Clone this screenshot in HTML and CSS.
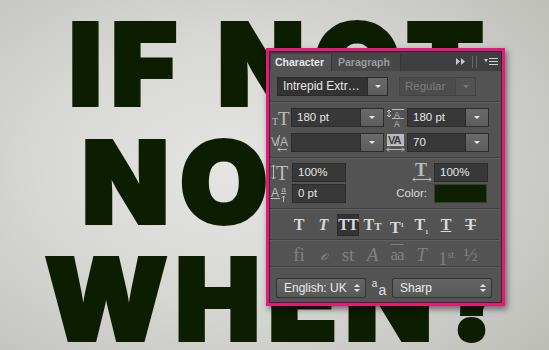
FILE: index.html
```html
<!DOCTYPE html>
<html lang="en">
<head>
    <meta charset="UTF-8">
    <meta name="viewport" content="width=device-width, initial-scale=1.0">
    <title>If Not Now When - Character panel</title>
    <link rel="stylesheet" href="styles.css">
</head>
<body>
    <div class="poster">
        <div class="line line-1">IF NOT</div>
        <div class="line line-2">NOW</div>
        <div class="line line-3">WHEN?</div>
    </div>

    <!-- Character panel (floats over the artwork) -->
    <div class="panel">
        <div class="panel-inner">
            <div class="tabs">
                <div class="tab active">Character</div>
                <div class="tab">Paragraph</div>
                <div class="tab-tools">
                    <svg width="9" height="7" viewBox="0 0 9 7"><path d="M0 0 L4 3.5 L0 7 Z M5 0 L9 3.5 L5 7 Z" fill="#c9c9c9"/></svg>
                    <span class="grip"></span>
                    <svg width="14" height="9" viewBox="0 0 14 9"><path d="M0 2 L4 2 L2 5 Z" fill="#d0d0d0"/><path d="M5 1.5 H14 M5 4.5 H14 M5 7.5 H14" stroke="#d0d0d0" stroke-width="1.2"/></svg>
                </div>
            </div>

            <div class="font-row">
                <div class="select font-select">
                    <span class="value">Intrepid Extr…</span>
                    <span class="drop"><i class="caret"></i></span>
                </div>
                <div class="select style-select">
                    <span class="value">Regular</span>
                    <span class="drop"><i class="caret"></i></span>
                </div>
            </div>

            <div class="sep"></div>

            <div class="metric-row">
                <div class="icon icon-a">
                    <svg width="21" height="19" viewBox="0 0 21 19">
                        <text x="2" y="17" class="serif" font-size="10" fill="#bcbcbc">T</text>
                        <text x="8" y="17" class="serif" font-size="19" fill="#bcbcbc">T</text>
                    </svg>
                </div>
                <div class="field field-lg">
                    <span class="value">180 pt</span>
                    <span class="drop"><i class="caret"></i></span>
                </div>
                <div class="icon icon-b">
                    <svg width="23" height="19" viewBox="0 0 23 19">
                        <path d="M8 1.5 H20" stroke="#bcbcbc" stroke-width="1"/>
                        <text x="10" y="9.5" class="sans" font-size="8.5" fill="#bcbcbc">A</text>
                        <path d="M8 10.5 H20" stroke="#bcbcbc" stroke-width="1"/>
                        <text x="10" y="19" class="sans" font-size="8.5" fill="#bcbcbc">A</text>
                        <path d="M5 2 V9 M3 4 L5 2 L7 4 M3 7 L5 9 L7 7" stroke="#bcbcbc" stroke-width="1" fill="none"/>
                    </svg>
                </div>
                <div class="field field-md">
                    <span class="value">180 pt</span>
                    <span class="drop"><i class="caret"></i></span>
                </div>
            </div>

            <div class="metric-row second">
                <div class="icon icon-a">
                    <svg width="21" height="19" viewBox="0 0 21 19">
                        <text x="1" y="13" class="sans" font-size="12" fill="#bcbcbc">V</text>
                        <path d="M9.5 2 L7.5 13" stroke="#bcbcbc" stroke-width="1"/>
                        <text x="10" y="13" class="sans" font-size="12" fill="#bcbcbc">A</text>
                        <path d="M8 16.5 H17 M10 14.5 L8 16.5 L10 18.5" stroke="#bcbcbc" stroke-width="1" fill="none"/>
                    </svg>
                </div>
                <div class="field field-lg">
                    <span class="value"></span>
                    <span class="drop"><i class="caret"></i></span>
                </div>
                <div class="icon icon-b">
                    <svg width="23" height="19" viewBox="0 0 23 19">
                        <rect x="3" y="1" width="17" height="11" fill="#b9b9b9"/>
                        <text x="4" y="11" class="sans" font-size="11" font-weight="bold" fill="#3d3d3d" letter-spacing="-1">VA</text>
                        <path d="M3 12.5 H20" stroke="#d0d0d0" stroke-width="1"/>
                        <path d="M3 16.5 H20 M5 14.5 L3 16.5 L5 18.5 M18 14.5 L20 16.5 L18 18.5" stroke="#bcbcbc" stroke-width="1" fill="none"/>
                    </svg>
                </div>
                <div class="field field-md">
                    <span class="value">70</span>
                    <span class="drop"><i class="caret"></i></span>
                </div>
            </div>

            <div class="sep"></div>

            <div class="scale-row">
                <div class="icon icon-c">
                    <svg width="22" height="19" viewBox="0 0 22 19">
                        <path d="M3.5 2 V16 M1.5 4 L3.5 2 L5.5 4 M1.5 14 L3.5 16 L5.5 14" stroke="#bcbcbc" stroke-width="1" fill="none"/>
                        <text x="6" y="17" class="serif" font-size="20" fill="#bcbcbc">T</text>
                    </svg>
                </div>
                <div class="field field-sm"><span class="value">100%</span></div>
                <div class="label-cell">
                    <svg width="22" height="19" viewBox="0 0 22 19">
                        <text x="4" y="13" class="serif" font-size="18" font-weight="bold" fill="#bcbcbc">T</text>
                        <path d="M2 16.5 H20 M4 14.5 L2 16.5 L4 18.5 M18 14.5 L20 16.5 L18 18.5" stroke="#bcbcbc" stroke-width="1" fill="none"/>
                    </svg>
                </div>
                <div class="field field-sm"><span class="value">100%</span></div>
            </div>

            <div class="scale-row second">
                <div class="icon icon-c">
                    <svg width="22" height="19" viewBox="0 0 22 19">
                        <text x="1" y="13" class="sans" font-size="12" fill="#bcbcbc">A</text>
                        <path d="M1 14.5 H10" stroke="#bcbcbc" stroke-width="1"/>
                        <text x="11.5" y="8" class="sans" font-size="8" fill="#bcbcbc">a</text>
                        <path d="M11 9.5 H16" stroke="#bcbcbc" stroke-width="1"/>
                        <path d="M13.5 12 V18 M12 13.5 L13.5 12 L15 13.5" stroke="#bcbcbc" stroke-width="1" fill="none"/>
                    </svg>
                </div>
                <div class="field field-sm"><span class="value">0 pt</span></div>
                <div class="label-cell color-label">Color:</div>
                <div class="swatch"></div>
            </div>

            <div class="sep"></div>

            <div class="type-row">
                <span class="tbtn">T</span>
                <span class="tbtn italic">T</span>
                <span class="tbtn on">TT</span>
                <span class="tbtn">T<small>T</small></span>
                <span class="tbtn">T<sup>1</sup></span>
                <span class="tbtn">T<sub>1</sub></span>
                <span class="tbtn under">T</span>
                <span class="tbtn strike">T</span>
            </div>

            <div class="sep sep-tight"></div>

            <div class="type-row opentype">
                <span class="tbtn">fi</span>
                <span class="tbtn script">ℴ</span>
                <span class="tbtn">st</span>
                <span class="tbtn italic thin">A</span>
                <span class="tbtn arrow">aa</span>
                <span class="tbtn italic thin">T</span>
                <span class="tbtn">1<sup>st</sup></span>
                <span class="tbtn">½</span>
            </div>

            <div class="sep sep-last"></div>

            <div class="bottom-row">
                <div class="spin spin-lang">
                    <span class="value">English: UK</span>
                    <span class="updown"><i class="up"></i><i class="down"></i></span>
                </div>
                <div class="aa-icon"><span class="small-a">a</span><span class="big-a">a</span></div>
                <div class="spin spin-aa">
                    <span class="value">Sharp</span>
                    <span class="updown"><i class="up"></i><i class="down"></i></span>
                </div>
            </div>
        </div>
    </div>
</body>
</html>
```

FILE: styles.css
```css
body {
    width: 549px;
    height: 350px;
    margin: 0;
    overflow: hidden;
    position: relative;
    font-family: 'Liberation Sans', Arial, sans-serif;
    background: radial-gradient(ellipse 75% 80% at 42% 48%, #e4e4e2 0%, #d8d8d5 45%, #bebeb9 100%);
}

/* big artwork text */
.poster {
    padding-top: 6px;
}

.line {
    font-family: 'Inter', 'Liberation Sans', sans-serif;
    font-weight: 900;
    font-size: 113px;
    line-height: 117.5px;
    height: 117.5px;
    color: #0d1d00;
    white-space: nowrap;
    -webkit-text-stroke: 4px #0d1d00;
    text-shadow: 0 0 2px rgba(70, 90, 50, 0.6);
}

.line-1 {
    padding-left: 69px;
    letter-spacing: 9px;
}

.line-2 {
    padding-left: 82px;
    letter-spacing: 11px;
}

.line-3 {
    padding-left: 45px;
    letter-spacing: 8px;
}

/* panel */
.panel {
    position: absolute;
    left: 266px;
    top: 48px;
    width: 239px;
    height: 258px;
    box-sizing: border-box;
    border: 3px solid #f1127a;
    background: #535353;
    box-shadow: 2px 3px 6px rgba(0, 0, 0, 0.5);
}

.panel-inner {
    height: 100%;
    box-sizing: border-box;
    border: 1px solid #2e2e2e;
    color: #e6e6e6;
    font-size: 11.5px;
}

.tabs {
    display: flex;
    align-items: flex-end;
    height: 19px;
    background: #3f3f3f;
}

.tab {
    height: 17px;
    line-height: 17px;
    padding: 0 4px;
    font-size: 10.5px;
    font-weight: bold;
    color: #9a9a9a;
    background: #474747;
    box-sizing: border-box;
    border-right: 1px solid #353535;
    white-space: nowrap;
}

.tab.active {
    margin-left: 1px;
    width: 61px;
    color: #e8e8e8;
    background: #535353;
}

.tab:not(.active) {
    width: 69px;
    padding-left: 6px;
}

.tab-tools {
    flex: 1;
    display: flex;
    align-items: center;
    justify-content: flex-end;
    gap: 5px;
    height: 19px;
    padding-right: 3px;
}

.grip {
    width: 3px;
    height: 12px;
    border-left: 1px solid #666;
    border-right: 1px solid #666;
    margin: 0 2px;
}

/* dropdowns */
.font-row {
    display: flex;
    gap: 11px;
    padding: 6px 0 0 7px;
}

.select {
    display: flex;
    height: 19px;
    box-sizing: border-box;
    border: 1px solid #2a2a2a;
    background: #333;
}

.select .value,
.field .value {
    flex: 1;
    padding-left: 5px;
    line-height: 17px;
    white-space: nowrap;
}

.drop {
    width: 19px;
    display: flex;
    align-items: center;
    justify-content: center;
    background: linear-gradient(#6a6a6a, #5c5c5c);
    border-left: 1px solid #2a2a2a;
}

.caret {
    width: 0;
    height: 0;
    border-left: 3px solid transparent;
    border-right: 3px solid transparent;
    border-top: 3px solid #e6e6e6;
}

.font-select {
    width: 111px;
    font-size: 12px;
}

.style-select {
    width: 77px;
    background: #4c4c4c;
    border-color: #434343;
    color: #7c7c7c;
}

.style-select .drop {
    background: #525252;
    border-left-color: #464646;
}

.style-select .caret {
    border-top-color: #7a7a7a;
}

.sep {
    margin-top: 5px;
    border-top: 1px solid #404040;
    border-bottom: 1px solid #606060;
    margin-right: 2px;
}

.sep-tight {
    margin-top: 3px;
}

.sep-last {
    margin-top: 1px;
}

/* metric rows */
.metric-row,
.scale-row {
    display: flex;
    height: 19px;
    margin-top: 5px;
}

.metric-row.second {
    margin-top: 6px;
}

.scale-row {
    margin-top: 4px;
}

.scale-row.second {
    margin-top: 2px;
}

.icon {
    display: flex;
    align-items: center;
    justify-content: center;
}

.icon svg,
.label-cell svg {
    display: block;
}

.icon-a {
    width: 21px;
}

.icon-b {
    width: 23px;
}

.icon-c {
    width: 22px;
}

.field {
    display: flex;
    height: 19px;
    box-sizing: border-box;
    background: #383838;
    border: 1px solid #2c2c2c;
}

.field .drop {
    width: 22px;
}

.field-lg {
    width: 93px;
}

.field-md {
    width: 82px;
}

.field-sm {
    width: 54px;
}

.label-cell {
    width: 88px;
    display: flex;
    justify-content: flex-end;
    box-sizing: border-box;
}

.label-cell svg {
    margin-right: 1px;
}

.color-label {
    line-height: 19px;
    padding-right: 7px;
    color: #dcdcdc;
}

.swatch {
    width: 53px;
    height: 19px;
    box-sizing: border-box;
    background: #0f2000;
    border: 1px solid #3a3a3a;
}

.sans {
    font-family: 'Liberation Sans', Arial, sans-serif;
}

.serif {
    font-family: 'Liberation Serif', 'Times New Roman', serif;
}

/* type style buttons */
.type-row {
    display: flex;
    gap: 2.5px;
    padding-left: 18px;
    margin-top: 4px;
    height: 22px;
}

.tbtn {
    width: 22px;
    height: 22px;
    line-height: 22px;
    text-align: center;
    font-family: 'Liberation Serif', 'Times New Roman', serif;
    font-weight: bold;
    font-size: 16px;
    color: #dadada;
    box-sizing: border-box;
    white-space: nowrap;
}

.tbtn.on {
    background: #333;
    border: 1px solid #2a2a2a;
    line-height: 20px;
    letter-spacing: -1px;
}

.tbtn small {
    font-size: 11px;
}

.tbtn sup,
.tbtn sub {
    font-size: 7px;
}

.tbtn.italic {
    font-style: italic;
}

.tbtn.under {
    text-decoration: underline;
}

.tbtn.strike {
    text-decoration: line-through;
}

.opentype {
    margin-top: 2px;
    height: 22px;
}

.opentype .tbtn {
    font-weight: normal;
    color: #808080;
    font-size: 19px;
    line-height: 23px;
}

.opentype .tbtn.script {
    font-family: 'DejaVu Serif', serif;
    font-style: italic;
    font-size: 17px;
}

.opentype .tbtn.arrow {
    text-decoration: overline;
    letter-spacing: -1px;
    font-size: 17px;
}

.opentype .tbtn sup {
    font-size: 10px;
}

/* bottom selects */
.bottom-row {
    display: flex;
    align-items: center;
    padding: 10px 0 0 6px;
}

.spin {
    display: flex;
    align-items: center;
    height: 20px;
    box-sizing: border-box;
    border: 1px solid #333;
    border-radius: 2px;
    background: linear-gradient(#656565, #585858);
    color: #ececec;
    font-size: 12px;
}

.spin .value {
    flex: 1;
    padding-left: 7px;
    white-space: nowrap;
}

.spin-lang {
    width: 90px;
}

.spin-aa {
    width: 100px;
}

.updown {
    display: flex;
    flex-direction: column;
    gap: 2px;
    margin-right: 5px;
}

.updown i {
    width: 0;
    height: 0;
    border-left: 3px solid transparent;
    border-right: 3px solid transparent;
}

.updown .up {
    border-bottom: 3px solid #e0e0e0;
}

.updown .down {
    border-top: 3px solid #e0e0e0;
}

.aa-icon {
    width: 26px;
    height: 20px;
    display: flex;
    align-items: flex-start;
    justify-content: center;
    gap: 1px;
    color: #e0e0e0;
    font-family: 'Liberation Sans', Arial, sans-serif;
}

.small-a {
    font-size: 10px;
    line-height: 12px;
}

.big-a {
    font-size: 14px;
    line-height: 24px;
}
```
